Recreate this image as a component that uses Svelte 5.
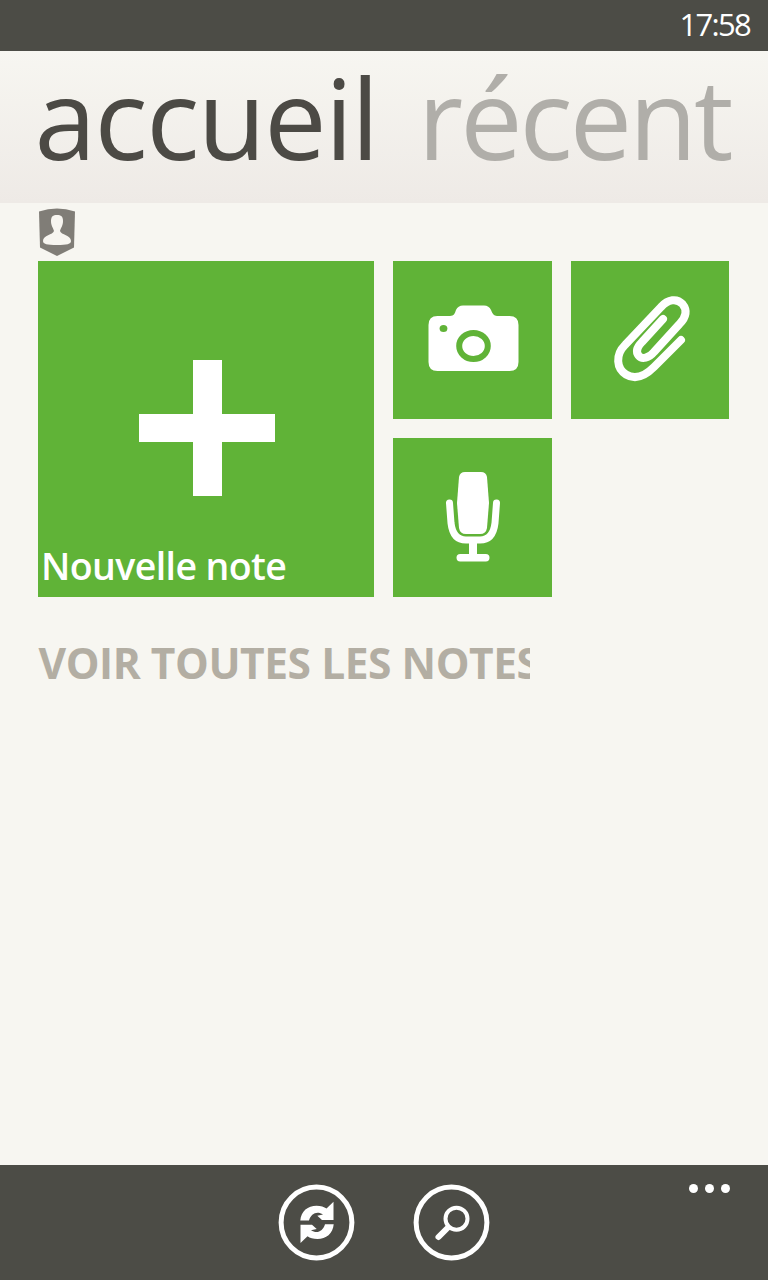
<script lang="ts">
    const time = '17:58';
    const sections = [
        { label: 'accueil', active: true },
        { label: 'récent', active: false },
    ];
</script>

<div class="screen">
    <div class="status-bar">
        <span class="clock">{time}</span>
    </div>

    <header class="pivot">
        {#each sections as section}
            <span class="pivot-item" class:active={section.active}>{section.label}</span>
        {/each}
    </header>

    <main>
        <svg class="account" width="38" height="49" viewBox="0 0 38 49">
            <path fill="#807d77" d="M1 3.500Q19-2.500 37 3.500L36 39.500L19 48L2 39.500Z" />
            <path fill="#f7f5f0" d="M13 13C13 8.500 15 7 19 7S25 8.500 25 13C25 18 23 19 22 23C23 27 33 27 33 33C33 36 29 37 19 37S5 36 5 33C5 27 15 27 16 23C15 19 13 18 13 13Z" />
        </svg>

        <div class="tiles">
            <div class="tile tile-large">
                <svg class="plus" width="136" height="136" viewBox="0 0 136 136">
                    <path fill="#fff" d="M54 0H83V54H136V82H83V136H54V82H0V54H54Z" />
                </svg>
                <span class="tile-label">Nouvelle note</span>
            </div>
            <div class="tile">
                <svg width="158" height="158" viewBox="0 0 158 158">
                    <path fill="#fff" d="M44.500 55H57C61 55 62 52 63 49Q65 44.500 70 44.500H91Q96 44.500 98 49C99 52 101 55 104 55H116.500Q125.500 55 125.500 64V101Q125.500 110 116.500 110H44.500Q35.500 110 35.500 101V64Q35.500 55 44.500 55Z" />
                    <ellipse cx="50.500" cy="67.500" rx="3.900" ry="3.500" fill="#60b337" />
                    <ellipse cx="80.500" cy="85" rx="14.300" ry="13" fill="none" stroke="#60b337" stroke-width="6" />
                </svg>
            </div>
            <div class="tile">
                <svg width="158" height="158" viewBox="0 0 158 158">
                    <path class="clip" d="M110 79L83 106C73 116 64 119 55 113.500C45.500 107.500 44 94 54 84L90 46C97 38 106 37 111.500 43C116.500 49 115.500 56 108.500 63L83 91C78 97 71 99 67.500 94.500C64.500 90.500 66 86 71 81L92 58" />
                </svg>
            </div>
            <div class="tile">
                <svg width="158" height="158" viewBox="0 0 158 158">
                    <path fill="#fff" d="M72 34H88Q93 34 94 39L96 65L94 90Q93 96 87 96H73Q67 96 66 90L64 65L66 39Q67 34 72 34Z" />
                    <path class="stand" d="M56.500 65L58 85Q60 102 73 102H87Q100 102 102 85L103.500 65" />
                    <path fill="#fff" d="M76 103H84V117H76Z" />
                    <rect x="63.500" y="116" width="33" height="7.500" rx="3.700" fill="#fff" />
                </svg>
            </div>
        </div>

        <div class="all-notes">VOIR TOUTES LES NOTES</div>
    </main>

    <footer class="app-bar">
        <svg width="77" height="77" viewBox="0 0 77 77">
            <circle class="ring" cx="38.500" cy="38.500" r="35.400" />
            <path id="arrow" fill="#fff" d="M22.300 36.500C23 27 30 21.700 38.500 21.700C43 21.700 46 22.800 48.500 24.500L55.500 17.700V36H44L39.300 31.700L45 30.500C39 26.500 33 29.500 31 36.500Z" />
            <use href="#arrow" transform="rotate(180 39 38.400)" />
        </svg>
        <svg width="77" height="77" viewBox="0 0 77 77">
            <circle class="ring" cx="38.500" cy="38.500" r="35.400" />
            <circle cx="43.500" cy="34.700" r="11" fill="none" stroke="#fff" stroke-width="4" />
            <path d="M34 44.500L25.500 53" stroke="#fff" stroke-width="6" stroke-linecap="round" />
        </svg>
        <div class="more">
            <i></i><i></i><i></i>
        </div>
    </footer>
</div>

<style>
    :global(body) {
        margin: 0;
    }

    .screen {
        display: flex;
        flex-direction: column;
        width: 768px;
        height: 1280px;
        overflow: hidden;
        background: #f7f6f1;
        font-family: "Open Sans", "Noto Sans", sans-serif;
    }

    svg {
        display: block;
    }

    .status-bar {
        display: flex;
        justify-content: flex-end;
        box-sizing: border-box;
        height: 51px;
        padding-right: 18px;
        background: #4c4c46;
    }

    .clock {
        color: #fff;
        font-size: 31px;
        line-height: 49px;
        letter-spacing: -1.7px;
    }

    .pivot {
        display: flex;
        gap: 40px;
        box-sizing: border-box;
        height: 152.4px;
        padding-left: 34.5px;
        background: linear-gradient(#f7f6f1, #eeeae6);
        white-space: nowrap;
    }

    .pivot-item {
        color: #b0aea9;
        font-size: 111px;
        line-height: 132px;
        letter-spacing: -3px;
    }

    .pivot-item.active {
        color: #4c4a45;
        letter-spacing: -1.6px;
    }

    main {
        flex: 1;
        padding: 5px 38px 0;
    }

    .tiles {
        display: grid;
        grid-template-columns: 336px 158.500px 158.500px;
        grid-template-rows: 158px 159px;
        gap: 19px;
        margin-top: 3.600px;
    }

    .tile {
        background: #60b337;
    }

    .tile-large {
        display: flex;
        flex-direction: column;
        justify-content: space-between;
        grid-row: span 2;
    }

    .plus {
        margin: 99px 0 0 101px;
    }

    .tile-label {
        padding-left: 3px;
        color: #fff;
        font-size: 37.500px;
        font-weight: 600;
        line-height: 62px;
        letter-spacing: -0.600px;
        white-space: nowrap;
    }

    .clip {
        fill: none;
        stroke: #fff;
        stroke-width: 8;
        stroke-linecap: round;
        stroke-linejoin: round;
    }

    .stand {
        fill: none;
        stroke: #fff;
        stroke-width: 7;
        stroke-linecap: round;
    }

    .all-notes {
        width: 492px;
        margin-top: 36px;
        overflow: hidden;
        color: #b3aea3;
        font-size: 42.500px;
        font-weight: 700;
        line-height: 60px;
        letter-spacing: -0.450px;
        text-indent: 0.5px;
        white-space: nowrap;
    }

    .app-bar {
        position: relative;
        display: flex;
        justify-content: center;
        gap: 58px;
        box-sizing: border-box;
        height: 115px;
        padding-top: 19px;
        background: #4c4c46;
    }

    .ring {
        fill: none;
        stroke: #fff;
        stroke-width: 5;
    }

    .more {
        position: absolute;
        top: 19px;
        right: 38px;
        display: flex;
        gap: 7px;
    }

    .more i {
        width: 9px;
        height: 9px;
        border-radius: 50%;
        background: #fff;
    }
</style>
